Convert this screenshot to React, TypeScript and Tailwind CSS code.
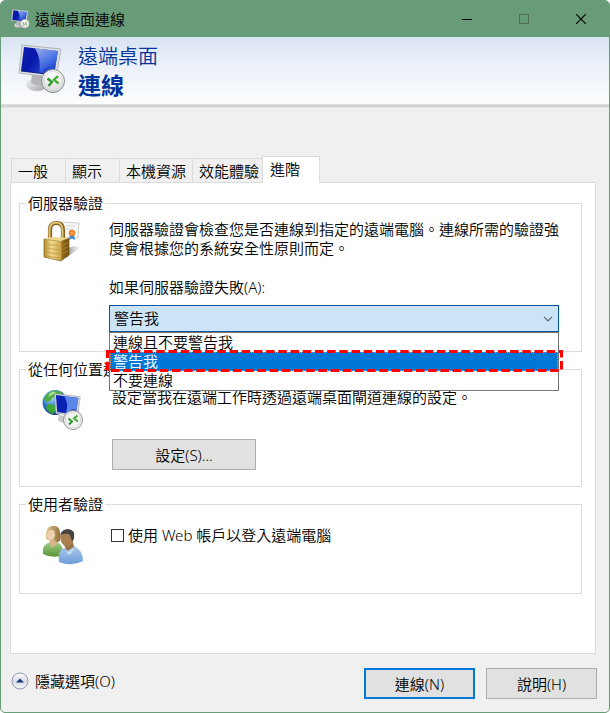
import { useState } from 'react';
import type { ReactNode } from 'react';

interface GroupBoxProps {
  title: string;
  icon: ReactNode;
  className: string;
  children: ReactNode;
}

const TABS = ['一般', '顯示', '本機資源', '效能體驗', '進階'];

const AUTH_OPTIONS = ['連線且不要警告我', '警告我', '不要連線'];

// Monitor on a stand with the round remote badge
function MonitorShapes({ id }: { id: string }) {
  return (
    <>
      <defs>
        <linearGradient id={`${id}-screen`} x1="0" y1="0" x2="1" y2="0.5">
          <stop offset="0" stopColor="#0a1fb4" />
          <stop offset="0.45" stopColor="#0718a8" />
          <stop offset="1" stopColor="#2c55dc" />
        </linearGradient>
        <linearGradient id={`${id}-shine`} x1="0" y1="0" x2="0.6" y2="1">
          <stop offset="0" stopColor="#c3d6fb" />
          <stop offset="0.6" stopColor="#5580ea" />
          <stop offset="1" stopColor="#1232c4" />
        </linearGradient>
        <linearGradient id={`${id}-stand`} x1="0" y1="0" x2="1" y2="1">
          <stop offset="0" stopColor="#f7f7f7" />
          <stop offset="1" stopColor="#9c9fa2" />
        </linearGradient>
        <linearGradient id={`${id}-badge`} x1="0" y1="0" x2="0" y2="1">
          <stop offset="0" stopColor="#ffffff" />
          <stop offset="1" stopColor="#dcdcdc" />
        </linearGradient>
      </defs>
      <ellipse cx="19" cy="41" rx="10" ry="6" fill={`url(#${id}-stand)`} stroke="#c4c6c8" strokeWidth="0.6" />
      <path d="M14 30 L25 31 L26 40 Q20 43 13 39 Z" fill="#b3b5b8" />
      <path d="M4 1 L43 5 L38 34 L1 29 Z" fill="#dcdee0" stroke="#a8abae" strokeWidth="0.8" />
      <path d="M6 3 L40 7 L36 31 L3 27 Z" fill={`url(#${id}-screen)`} />
      <path d="M17 4.3 L40 7 L37 25 Q27 19 24 30 L21 29 Q24 16 17 4.3 Z" fill={`url(#${id}-shine)`} opacity="0.8" />
      <path d="M3 27 L36 31" stroke="#020c74" strokeWidth="0.8" />
      <circle cx="35" cy="37" r="11.500" fill={`url(#${id}-badge)`} stroke="#85888a" strokeWidth="1" />
      <circle cx="35" cy="37" r="9.500" fill="none" stroke="#c6c8c9" strokeWidth="0.7" />
      <path d="M29.500 34.500 L34 38 L30.500 42" fill="none" stroke="#2f9a2b" strokeWidth="2.300" />
      <path d="M40 32 L36 35.800 L40.500 39.500" fill="none" stroke="#3fae33" strokeWidth="2.300" />
    </>
  );
}

function RemoteIcon({ id, className }: { id: string; className: string }) {
  return (
    <svg viewBox="0 0 48 50" className={className} aria-hidden="true">
      <MonitorShapes id={id} />
    </svg>
  );
}

function GatewayIcon() {
  return (
    <svg viewBox="0 0 42 42" className="h-[42px] w-[42px]" aria-hidden="true">
      <defs>
        <radialGradient id="globe" cx="0.35" cy="0.3" r="0.75">
          <stop offset="0" stopColor="#b6dcf8" />
          <stop offset="0.5" stopColor="#2f7cc8" />
          <stop offset="1" stopColor="#0b2f78" />
        </radialGradient>
      </defs>
      <circle cx="13" cy="13.500" r="12.500" fill="url(#globe)" />
      <path d="M8 3 Q15 0 21 4 L17 6 L14 9 L11 8 L8 12 L4 13 L2 10 Q4 5 8 3 Z" fill="#4faf3c" />
      <path d="M6 15 L12 16 L15 19 L11 25 Q6 23 4 19 Z" fill="#3fa534" />
      <path d="M8 4 Q12 2 14 3 L10 6 L6 8 Z" fill="#c9efb8" opacity="0.8" />
      <g transform="translate(12 4) scale(0.64 0.7)">
        <path d="M1 1 L41 5 L37 33 L3 29 Z" fill="#d6d8da" stroke="#a8abae" />
        <path d="M3 3 L38 7 L34 31 L5 27 Z" fill="#0a22b4" />
        <path d="M16 4.500 L38 7 L35 25 Q27 20 23 29 L18 29 Q24 16 16 4.500 Z" fill="#5b86ea" />
      </g>
      <path d="M17 26 L24 27 L24 34 Q18 34 16 31 Z" fill="#c7c9cb" />
      <circle cx="31" cy="31" r="9.500" fill="#f2f2f2" stroke="#929597" />
      <circle cx="31" cy="31" r="7.800" fill="none" stroke="#d0d2d3" strokeWidth="0.7" />
      <path d="M26.500 29.500 L30 32.500 L27 35.500" fill="none" stroke="#2f9a2b" strokeWidth="2" />
      <path d="M35.500 26.500 L32 29.500 L36 32.500" fill="none" stroke="#3fae33" strokeWidth="2" />
    </svg>
  );
}

function LockIcon() {
  return (
    <svg viewBox="0 0 42 42" className="h-[42px] w-[42px]" aria-hidden="true">
      <defs>
        <linearGradient id="lock-body" x1="0" y1="0" x2="1" y2="0">
          <stop offset="0" stopColor="#b58a2c" />
          <stop offset="0.3" stopColor="#f0d88a" />
          <stop offset="0.68" stopColor="#cda548" />
          <stop offset="0.72" stopColor="#93691c" />
          <stop offset="1" stopColor="#74500f" />
        </linearGradient>
        <linearGradient id="lock-shadow" x1="0" y1="0" x2="1" y2="0">
          <stop offset="0" stopColor="#808080" />
          <stop offset="1" stopColor="#e8e8e8" stopOpacity="0.3" />
        </linearGradient>
      </defs>
      <path d="M24 38 L39 27 L33 26 L25 28 Z" fill="url(#lock-shadow)" />
      <path d="M20 2 L37 3 L36 18 L20 17 Z" fill="#f7f7f4" stroke="#d3d1ca" />
      <path d="M24 6 H33 M24 9 H31" stroke="#c9cdd4" strokeWidth="0.8" />
      <path d="M28 15 L27 20 L30 18.500 L33 20 L32 15 Z" fill="#3c86dc" />
      <circle cx="30" cy="13" r="3.300" fill="#f0812a" />
      <circle cx="30" cy="13" r="1.300" fill="#fbb066" />
      <path d="M8 20 V10 Q8 3 14.500 3 Q21 3 21 10 V20" fill="none" stroke="#80601f" strokeWidth="4.200" />
      <path d="M7.500 20 V10 Q8 2.500 14.500 2.500 Q20.500 3 20.500 10 V20" fill="none" stroke="#dcc074" strokeWidth="2" />
      <path d="M2 19 L19 21 L27 18 V35 L19 41 L2 37 Z" fill="url(#lock-body)" stroke="#80601f" strokeWidth="0.7" />
      <path d="M2 19 L10 17 L27 18 L19 21 Z" fill="#edd68c" />
      <path d="M2 24 L19 26 L26 23 M2 28 L19 30 L26 27 M2 32 L19 34 L26 31 M3 36 L19 38" fill="none" stroke="#b8933f" strokeWidth="0.7" />
    </svg>
  );
}

function UsersIcon() {
  return (
    <svg viewBox="0 0 42 42" className="h-[42px] w-[42px]" aria-hidden="true">
      <defs>
        <linearGradient id="user-green" x1="0" y1="0" x2="0" y2="1">
          <stop offset="0" stopColor="#a5cf86" />
          <stop offset="1" stopColor="#559237" />
        </linearGradient>
        <linearGradient id="user-blue" x1="0" y1="0" x2="0" y2="1">
          <stop offset="0" stopColor="#a9cbef" />
          <stop offset="1" stopColor="#6d9bd6" />
        </linearGradient>
        <linearGradient id="user-hair" x1="0" y1="0" x2="1" y2="0">
          <stop offset="0" stopColor="#e2c98f" />
          <stop offset="1" stopColor="#94713f" />
        </linearGradient>
      </defs>
      <path d="M1 29 Q0 20 6 18 L15 17 Q22 20 21 30 Q11 34 1 29 Z" fill="url(#user-green)" />
      <path d="M4 14 Q3 1 11 1 Q17 0 18 7 L18 16 Q13 19 9 16 Z" fill="url(#user-hair)" />
      <path d="M5 10 Q5 5 10 5 Q13 5 13 10 Q12 15 9 16 Q5 15 5 10 Z" fill="#ecd0b0" />
      <path d="M7 16 L13 15 L15 19 L10 23 Z" fill="#dcb48c" />
      <path d="M17 37 Q15 26 22 23 L32 21 Q41 25 41 36 Q30 42 17 37 Z" fill="url(#user-blue)" />
      <path d="M22 20 L31 17 L32 22 L25 26 Z" fill="#9a6f44" />
      <path d="M18 13 Q18 6 25 5 Q32 5 32 13 Q30 21 25 22 Q20 21 18 13 Z" fill="#a88052" />
      <path d="M18 10 Q20 4 26 4 Q34 5 32 13 L30 17 Q29 11 27 9 Q22 8 18 10 Z" fill="#45423e" />
      <path d="M24 25 L27 27 L32 22 L30 28 L26 30 Z" fill="#d3e5f8" opacity="0.8" />
    </svg>
  );
}

function CollapseIcon() {
  return (
    <svg viewBox="0 0 18 18" className="h-[18px] w-[18px]" aria-hidden="true">
      <defs>
        <linearGradient id="collapse" x1="0" y1="0" x2="0" y2="1">
          <stop offset="0" stopColor="#ffffff" />
          <stop offset="0.5" stopColor="#d9dce4" />
          <stop offset="1" stopColor="#f4f5f7" />
        </linearGradient>
      </defs>
      <circle cx="9" cy="9" r="8" fill="url(#collapse)" stroke="#9299a8" />
      <path d="M5 10.500 L9 6.500 L13 10.500 Z" fill="#173a78" />
    </svg>
  );
}

function GroupBox({ title, icon, className, children }: GroupBoxProps) {
  return (
    <fieldset className={`min-w-0 border border-[#dcdcdc] pl-[22px] pr-[21px] ${className}`}>
      <legend className="-ml-4 px-0.5 leading-5">{title}</legend>
      <div className="flex">
        <div className="w-[67px] shrink-0">{icon}</div>
        <div className="min-w-0 flex-1">{children}</div>
      </div>
    </fieldset>
  );
}

export default function App() {
  const [tab, setTab] = useState('進階');
  const [auth, setAuth] = useState('警告我');
  const [webAccount, setWebAccount] = useState(false);

  return (
    <div
      lang="zh-Hant"
      className="min-h-screen bg-white font-['Noto_Sans','Noto_Sans_CJK_TC',sans-serif] text-[15px] font-[350] leading-5 text-black"
    >
      <div className="flex min-h-screen flex-col overflow-hidden rounded-[5px] border border-[#689b78] bg-[#f0f0f0]">
        {/* Title bar */}
        <header className="flex h-9 shrink-0 items-center bg-[#689b78] pb-px pl-[10px]">
          <RemoteIcon id="title" className="h-5 w-[19px]" />
          <h1 className="ml-[5px] flex-1">遠端桌面連線</h1>
          <div className="flex">
            <button type="button" aria-label="最小化" className="flex h-9 w-[57px] items-center justify-center">
              <svg viewBox="0 0 10 10" className="h-[10px] w-[10px]">
                <path d="M0 5.500 H10" stroke="#000" />
              </svg>
            </button>
            <button type="button" aria-label="最大化" disabled className="flex h-9 w-[57px] items-center justify-center">
              <svg viewBox="0 0 10 10" className="h-[10px] w-[10px]">
                <rect x="0.5" y="0.5" width="9" height="9" fill="none" stroke="#4c6e57" />
              </svg>
            </button>
            <button type="button" aria-label="關閉" className="flex h-9 w-[57px] items-center justify-center">
              <svg viewBox="0 0 10 10" className="h-[10px] w-[10px]">
                <path d="M0 0 L10 10 M10 0 L0 10" stroke="#000" strokeWidth="1.200" />
              </svg>
            </button>
          </div>
        </header>

        {/* Banner */}
        <div className="flex h-[68px] shrink-0 items-center border-b border-[#dfdfdf] bg-linear-to-b from-[#d9e4f2] via-[#eaf0f9] via-40% to-[#fcfdfd] pl-[17px]">
          <RemoteIcon id="banner" className="mb-1 h-[50px] w-12" />
          <div className="ml-3 text-[#003399]">
            <p className="text-[20px] leading-7">遠端桌面</p>
            <p className="text-[23px] font-bold leading-7">連線</p>
          </div>
        </div>
        <div className="h-[3px] shrink-0 border-b border-[#e4e4e4] bg-[#d2d2d2]" />

        <main className="flex flex-1 flex-col px-[9px] pt-12">
          {/* Tabs */}
          <div role="tablist" className="z-10 flex items-end pl-px">
            {TABS.map(name => (
              <button
                key={name}
                type="button"
                role="tab"
                aria-selected={tab === name}
                onClick={() => setTab(name)}
                className={
                  tab === name
                    ? '-mb-px -ml-[3px] h-[27px] w-[58px] border border-b-0 border-[#dcdcdc] bg-white px-[7px] pb-[3px] text-left'
                    : 'h-6 min-w-[54px] border border-b-0 border-r-0 border-[#dcdcdc] px-[6px] text-left'
                }
              >
                {name}
              </button>
            ))}
          </div>

          {/* Advanced tab */}
          <div role="tabpanel" className="mr-1 flex-1 border border-[#dcdcdc] bg-white pl-2 pr-[13px] pt-[10px]">
            <GroupBox title="伺服器驗證" className="pb-[19px] pt-[7px]" icon={<LockIcon />}>
              <p className="leading-[19px]">
                伺服器驗證會檢查您是否連線到指定的遠端電腦。連線所需的驗證強度會根據您的系統安全性原則而定。
              </p>
              <label htmlFor="auth" className="mt-[19px] block">
                如果伺服器驗證失敗(A):
              </label>
              <div className="relative mr-px mt-2">
                <select
                  id="auth"
                  value={auth}
                  onChange={e => setAuth(e.target.value)}
                  className="block h-[27px] w-full appearance-none border border-[#00549a] bg-[#cce4f7] px-1 pb-0.5 leading-5 outline-none"
                >
                  {AUTH_OPTIONS.map(option => (
                    <option key={option}>{option}</option>
                  ))}
                </select>
                <svg viewBox="0 0 10 6" className="pointer-events-none absolute right-[6px] top-[11px] h-[6px] w-[10px]">
                  <path d="M1 0.8 L5 4.800 L9 0.8" fill="none" stroke="#5d6770" strokeWidth="1.200" />
                </svg>
                <ul
                  role="listbox"
                  aria-label="如果伺服器驗證失敗"
                  className="absolute inset-x-0 top-full z-20 border border-[#767676] bg-white"
                >
                  {AUTH_OPTIONS.map(option => (
                    <li
                      key={option}
                      role="option"
                      aria-selected={option === auth}
                      onClick={() => setAuth(option)}
                      className={
                        option === auth
                          ? 'relative h-[19px] bg-[#0078d7] px-[3px] leading-[19px] text-white'
                          : 'h-[19px] px-[3px] leading-[19px]'
                      }
                    >
                      {option}
                      {option === auth && (
                        <>
                          <span className="absolute inset-0 border border-dotted border-[#ff8728]" />
                          <svg className="absolute -left-1 -top-[2px] h-[22px] w-[calc(100%+9px)]" aria-hidden="true">
                            <rect
                              x="1.5"
                              y="1.5"
                              className="h-[19px] w-[calc(100%-3px)]"
                              fill="none"
                              stroke="#ff0000"
                              strokeWidth="3"
                              strokeDasharray="8.5 3.7"
                            />
                          </svg>
                        </>
                      )}
                    </li>
                  ))}
                </ul>
              </div>
            </GroupBox>

            <GroupBox
              title="從任何位置連線"
              className="mt-[7px] pb-4 pt-2"
              icon={
                <div className="pt-[2px]">
                  <GatewayIcon />
                </div>
              }
            >
              <div className="pl-[3px]">
                <p>設定當我在遠端工作時透過遠端桌面閘道連線的設定。</p>
                <button
                  type="button"
                  className="mt-8 h-[31px] w-36 border border-[#adadad] bg-[#e1e1e1]"
                >
                  設定(S)...
                </button>
              </div>
            </GroupBox>

            <GroupBox title="使用者驗證" className="mt-[7px] pb-[26px] pt-[11px]" icon={<UsersIcon />}>
              <label className="flex items-center gap-1 pl-[2px]">
                <input
                  type="checkbox"
                  checked={webAccount}
                  onChange={e => setWebAccount(e.target.checked)}
                  className="h-[13px] w-[13px] appearance-none border border-[#333333] bg-white checked:bg-[#0078d7]"
                />
                使用 Web 帳戶以登入遠端電腦
              </label>
            </GroupBox>
          </div>
        </main>

        {/* Footer */}
        <footer className="flex shrink-0 items-start gap-[11px] pb-[13px] pl-[10px] pr-3 pt-[14px]">
          <button type="button" className="mr-auto flex items-center gap-[6px] pt-[3px]">
            <CollapseIcon />
            隱藏選項(O)
          </button>
          <button type="button" className="h-[31px] w-[111px] border-2 border-[#0078d7] bg-[#e1e1e1]">
            連線(N)
          </button>
          <button type="button" className="h-[31px] w-[111px] border border-[#adadad] bg-[#e1e1e1]">
            說明(H)
          </button>
        </footer>
      </div>
    </div>
  );
}
